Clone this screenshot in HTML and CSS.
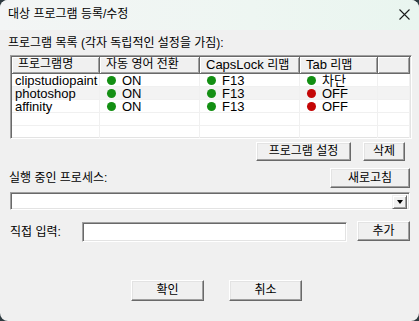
FILE: index.html
```html
<!DOCTYPE html>
<html>
<head lang="ko">
    <meta charset="UTF-8">
    <title>대상 프로그램 등록/수정</title>
    <link rel="stylesheet" href="styles.css">
</head>
<body>
    <div id="window">
        <div id="titlebar">
            <span class="title">대상 프로그램 등록/수정</span>
            <svg class="close" width="11" height="11" viewBox="0 0 11 11">
                <path d="M0.5 0.5 L10.5 10.5 M10.5 0.5 L0.5 10.5" stroke="#1a1a1a" stroke-width="1.1" fill="none"/>
            </svg>
        </div>
        <div id="content">
            <div class="label top-label">프로그램 목록 (각자 독립적인 설정을 가짐):</div>
            <div id="list">
                <div class="lv-head">
                    <span>프로그램명</span>
                    <span>자동 영어 전환</span>
                    <span><i class="en">CapsLock</i> 리맵</span>
                    <span><i class="en">Tab</i> 리맵</span>
                    <span></span>
                </div>
                <div class="lv-row">
                    <span>clipstudiopaint</span>
                    <span><b class="dot on"></b>ON</span>
                    <span><b class="dot on"></b>F13</span>
                    <span><b class="dot on"></b>차단</span>
                    <span></span>
                </div>
                <div class="lv-row alt">
                    <span>photoshop</span>
                    <span><b class="dot on"></b>ON</span>
                    <span><b class="dot on"></b>F13</span>
                    <span><b class="dot off"></b>OFF</span>
                    <span></span>
                </div>
                <div class="lv-row">
                    <span>affinity</span>
                    <span><b class="dot on"></b>ON</span>
                    <span><b class="dot on"></b>F13</span>
                    <span><b class="dot off"></b>OFF</span>
                    <span></span>
                </div>
                <div class="lv-row"><span></span><span></span><span></span><span></span><span></span></div>
                <div class="lv-row"><span></span><span></span><span></span><span></span><span></span></div>
            </div>
            <div class="row list-buttons">
                <button class="btn btn-setting">프로그램 설정</button>
                <button class="btn btn-delete">삭제</button>
            </div>
            <div class="row proc-row">
                <span class="label">실행 중인 프로세스:</span>
                <button class="btn btn-refresh">새로고침</button>
            </div>
            <div class="combo">
                <span class="combo-btn"><b class="arrow"></b></span>
            </div>
            <div class="row input-row">
                <span class="label">직접 입력:</span>
                <div class="edit"></div>
                <button class="btn btn-add">추가</button>
            </div>
            <div class="row footer">
                <button class="btn btn-ok">확인</button>
                <button class="btn btn-cancel">취소</button>
            </div>
        </div>
    </div>
</body>
</html>
```

FILE: styles.css
```css
*{
    padding: 0;
    margin: 0;
    box-sizing: border-box;
}
html{
    background: #2e3b40;
}
body{
    width: 419px;
    height: 321px;
    font-family: "Liberation Sans", "Noto Sans CJK KR", sans-serif;
    font-size: 12px;
    color: #000;
}
#window{
    width: 419px;
    height: 321px;
    background: #f0f0f0;
    border-radius: 8px;
    overflow: hidden;
}
#titlebar{
    height: 30px;
    background: linear-gradient(90deg, #f3f5f5 0%, #eef6f2 60%, #e9f5ef 100%);
    display: flex;
    align-items: center;
    justify-content: space-between;
    padding: 0 9px 2px 8px;
}
#titlebar .title{
    font-size: 12px;
    line-height: 14px;
}
#titlebar .close{
    display: block;
}
#content{
    display: flex;
    flex-direction: column;
    padding: 0 7px 0 10px;
}
.label{
    line-height: 14px;
    white-space: nowrap;
}
.top-label{
    margin: 6px 0 0 -2px;
}
.en{
    font-style: normal;
    font-size: 13px;
}

/* list view */
#list{
    margin-top: 5px;
    height: 84px;
    overflow: hidden;
    background: #fff;
    border: 1px solid;
    border-color: #a0a0a0 #fff #fff #a0a0a0;
    box-shadow: inset 1px 1px #696969, inset -1px -1px #e3e3e3;
    padding: 1px;
}
.lv-head, .lv-row{
    display: grid;
    grid-template-columns: 88px 100px 100px 78px 1fr;
}
.lv-head span{
    height: 17px;
    line-height: 15px;
    padding-left: 6px;
    background: #f0f0f0;
    border-right: 1px solid #696969;
    border-bottom: 1px solid #696969;
    box-shadow: inset 1px 1px #fff, inset -1px -1px #a0a0a0;
    white-space: nowrap;
}
.lv-head span:last-child{
    border-right: 1px solid #696969;
}
.lv-row span{
    height: 13px;
    line-height: 13px;
    font-size: 13px;
    padding-left: 3px;
    border-right: 1px solid #f0f0f0;
    border-bottom: 1px solid #f0f0f0;
    white-space: nowrap;
    display: flex;
    align-items: center;
}
.lv-row span + span{
    padding-left: 7px;
}
.lv-row.alt{
    background: #f3f3f3;
}
.dot{
    display: inline-block;
    width: 9px;
    height: 9px;
    border-radius: 50%;
    margin-right: 6px;
}
.dot.on{
    background: #138f13;
}
.dot.off{
    background: #c40606;
}

/* buttons */
.btn{
    font-family: inherit;
    font-size: 12px;
    color: #000;
    background: #f0f0f0;
    border: 1px solid;
    border-color: #fff #696969 #696969 #fff;
    box-shadow: inset -1px -1px #a0a0a0, inset 1px 1px #e3e3e3;
    height: 19px;
    line-height: 15px;
}
.row{
    display: flex;
    align-items: center;
}
.list-buttons{
    margin-top: 3px;
    justify-content: flex-end;
    gap: 12px;
    padding-right: 7px;
}
.btn-setting{
    width: 95px;
}
.btn-delete{
    width: 42px;
}
.proc-row{
    margin-top: 7px;
    justify-content: space-between;
    padding-right: 2px;
}
.proc-row .label{
    margin-left: -1px;
}
.btn-refresh{
    width: 80px;
    height: 20px;
}

/* combo box */
.combo{
    margin: 4px 2px 0 0;
    height: 18px;
    background: #fff;
    border: 1px solid;
    border-color: #a0a0a0 #fff #fff #a0a0a0;
    box-shadow: inset 1px 1px #696969, inset -1px -1px #e3e3e3;
    display: flex;
    justify-content: flex-end;
    padding: 2px;
}
.combo-btn{
    width: 15px;
    height: 14px;
    background: #f0f0f0;
    border: 1px solid;
    border-color: #f0f0f0 #696969 #696969 #f0f0f0;
    box-shadow: inset 1px 1px #fff, inset -1px -1px #a0a0a0;
    display: flex;
    align-items: center;
    justify-content: center;
}
.arrow{
    display: block;
    width: 0;
    height: 0;
    border-left: 3.5px solid transparent;
    border-right: 3.5px solid transparent;
    border-top: 4px solid #000;
}

/* direct input */
.input-row{
    margin-top: 12px;
    padding-right: 2px;
}
.input-row .label{
    width: 72px;
}
.edit{
    width: 265px;
    height: 20px;
    background: #fff;
    border: 1px solid;
    border-color: #a0a0a0 #fff #fff #a0a0a0;
    box-shadow: inset 1px 1px #696969, inset -1px -1px #e3e3e3;
}
.btn-add{
    width: 53px;
    height: 20px;
    margin-left: auto;
    align-self: flex-start;
    margin-top: -1px;
}

/* footer */
.footer{
    margin-top: 38px;
    padding-left: 121px;
    gap: 25px;
}
.btn-ok, .btn-cancel{
    width: 73px;
    height: 21px;
}
```
